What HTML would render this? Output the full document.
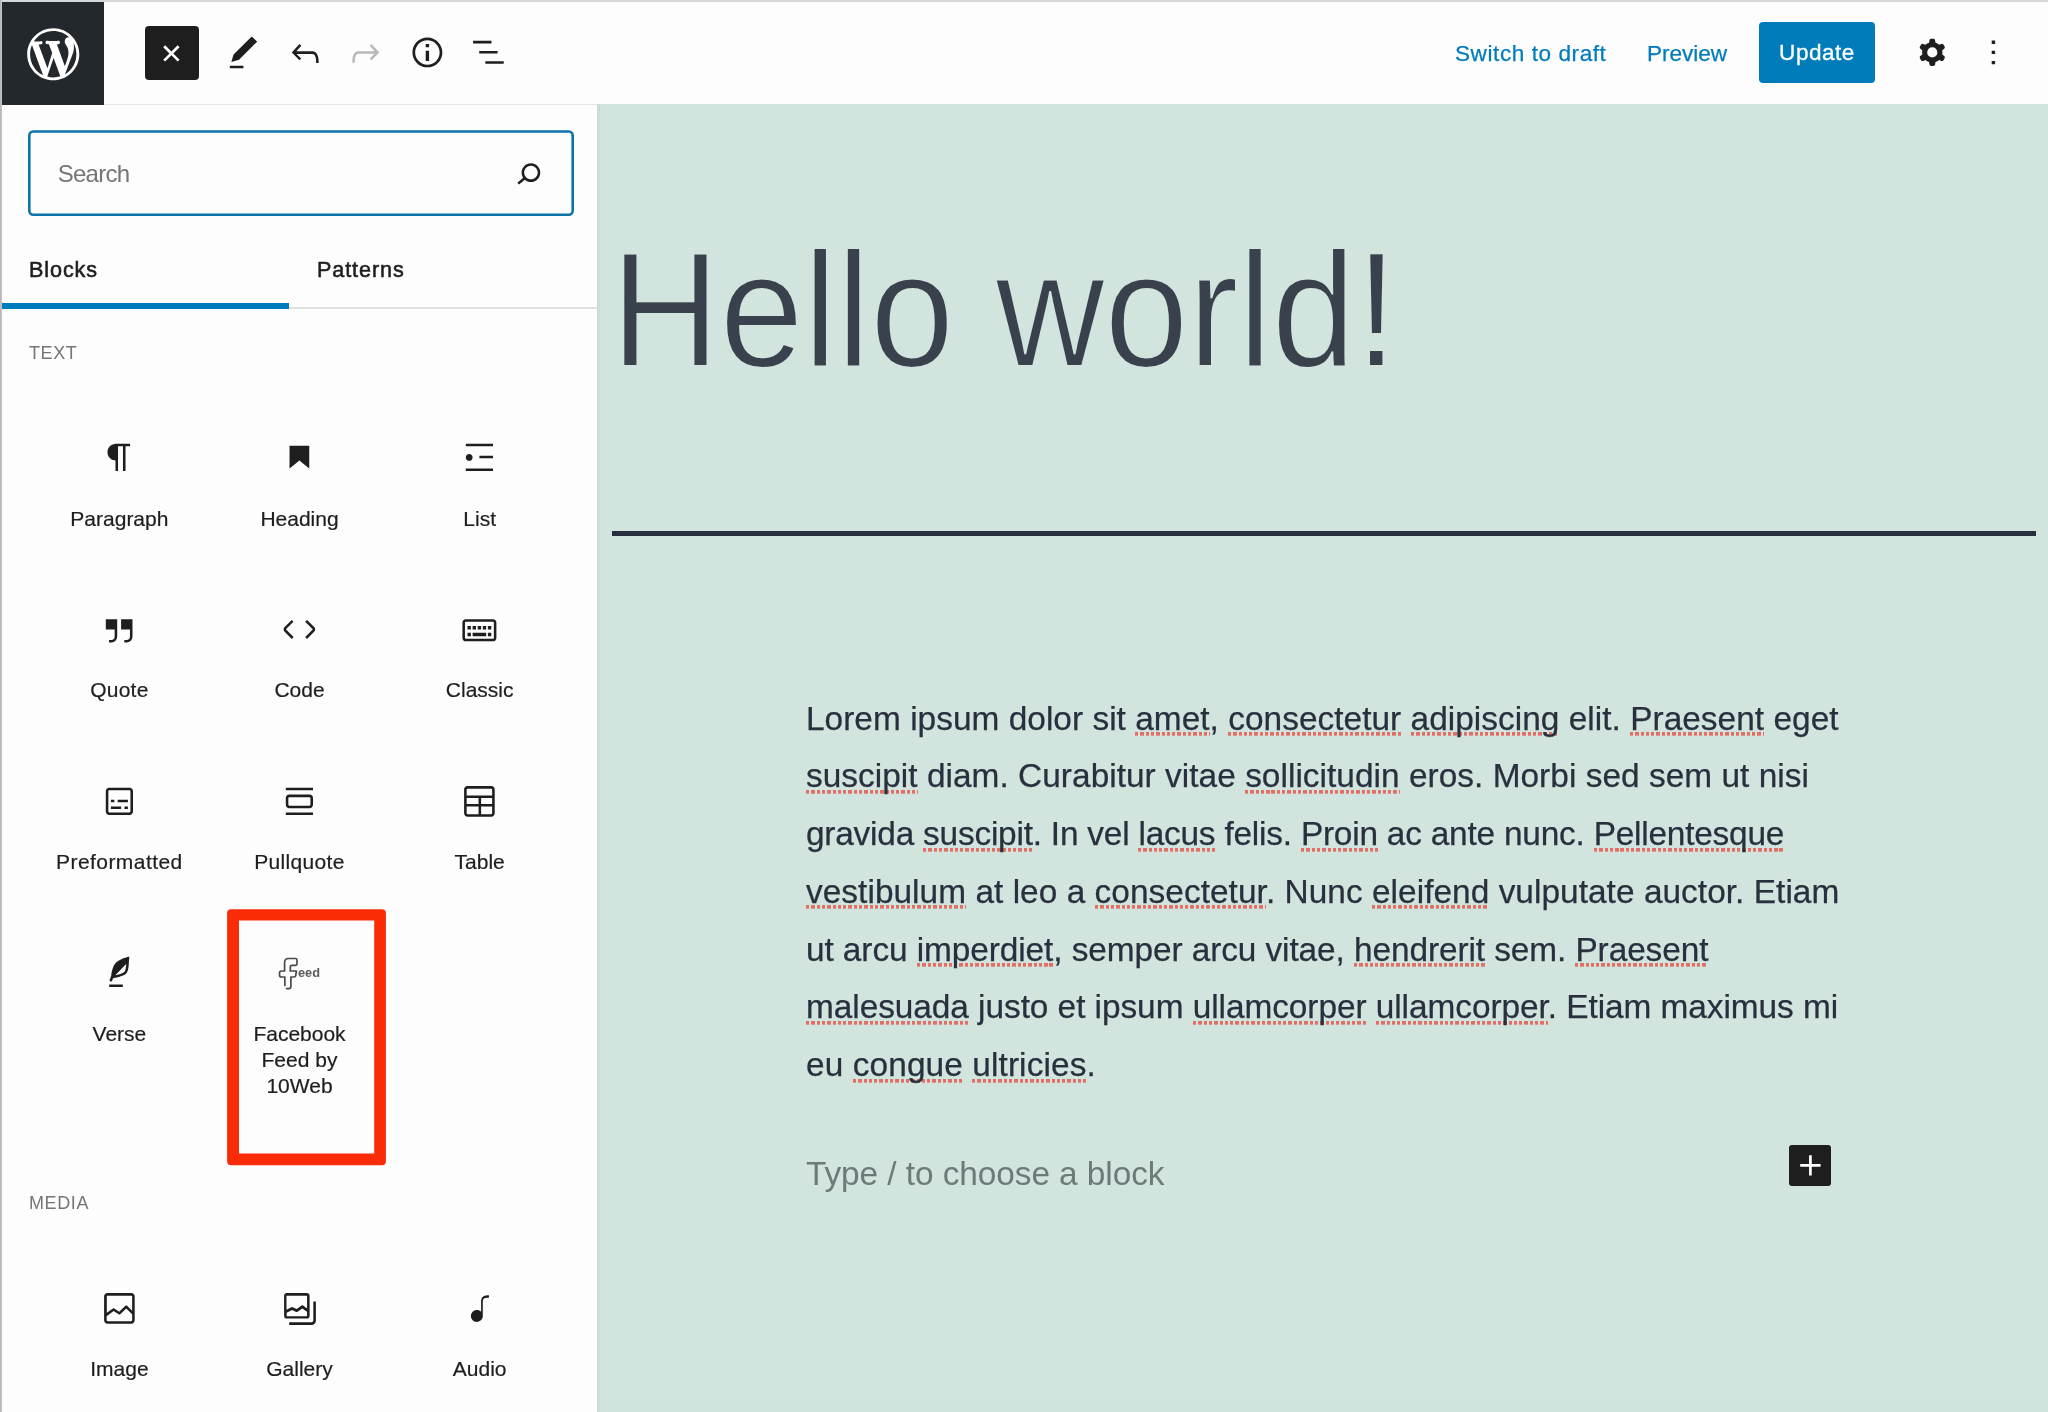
<!DOCTYPE html>
<html lang="en">
<head>
<meta charset="utf-8">
<title>Edit Post</title>
<style>
*{box-sizing:border-box;margin:0;padding:0}
html,body{width:2048px;height:1412px;overflow:hidden;background:#fff}
body{will-change:transform;font-family:"Liberation Sans",sans-serif;color:#1e1e1e;position:relative}
.abs{position:absolute}
#frame-top{left:0;top:0;width:2048px;height:2px;background:linear-gradient(#dadcde,#cfd1d3)}
#frame-left{left:0;top:0;width:2px;height:1412px;background:linear-gradient(90deg,#b4b6b8,#c4c6c8)}
#topbar{left:2px;top:2px;width:2046px;height:103px;background:#fdfdfd;border-bottom:1px solid #e6e6e6}
#wplogo{left:2px;top:2px;width:102px;height:103px;background:#23282d}
#closebtn{left:145px;top:26px;width:54px;height:54px;background:#1e1e1e;border-radius:4px}
#sidebar{left:2px;top:105px;width:595px;height:1307px;background:#fdfdfd}
#content{left:597px;top:104px;width:1451px;height:1308px;background:linear-gradient(#d2e4de 0 1296px,#cfe2db 1296px);border-left:3px solid #d0dbd6}
.ico{position:absolute}
.lnk{position:absolute;color:#007cba;font-size:22.6px;line-height:26px;white-space:nowrap;-webkit-text-stroke:.25px #007cba}
#update{left:1759px;top:22px;width:116px;height:61px;background:#007cba;border-radius:4px;color:#fff;font-size:22.6px;line-height:62px;text-align:center;letter-spacing:.5px;-webkit-text-stroke:.3px #fff}
#search{left:28px;top:130px;width:546px;height:86px}
#search span{position:absolute;left:29.7px;top:30px;font-size:24px;line-height:28px;color:#757575;letter-spacing:-.75px}
.tab{position:absolute;font-size:21.6px;line-height:26px;font-weight:normal;color:#1e1e1e;white-space:nowrap;-webkit-text-stroke:.55px #1e1e1e;letter-spacing:.9px}
#tabline{left:2px;top:307px;width:595px;height:2px;background:#e0e0e0}
#tabactive{left:2px;top:302.6px;width:287px;height:6.6px;background:#007cba}
.cat{position:absolute;font-size:18px;line-height:22px;color:#757575;letter-spacing:.6px;white-space:nowrap}
.lbl{position:absolute;width:180px;text-align:center;font-size:21px;line-height:26px;color:#1e1e1e;-webkit-text-stroke:.2px #1e1e1e}
#title{left:611px;top:218.2px;font-size:163px;line-height:184px;color:#39414d;white-space:nowrap;transform:scaleX(.9234);transform-origin:0 0;-webkit-text-stroke:2px #d2e4de}
#hr{left:612px;top:530.8px;width:1424px;height:4.9px;background:#28303d}
#para{left:806px;top:689.5px;width:1100px;font-size:33.4px;line-height:57.8px;color:#28303d;white-space:nowrap;-webkit-text-stroke:.25px #28303d}
#para .ln{display:block;height:57.8px}
#l1{letter-spacing:0.035px}#l2{letter-spacing:0.037px}#l3{letter-spacing:-0.213px}#l4{letter-spacing:0.045px}#l5{letter-spacing:-0.085px}#l6{letter-spacing:-0.052px}#l7{letter-spacing:0.105px}
#para u{text-decoration:none;padding-bottom:5px;background:repeating-linear-gradient(90deg,#e16f65 0 3.3px,transparent 3.3px 5.3px) 0 32.5px/100% 3.7px no-repeat}
#placeholder{left:806px;top:1144.8px;letter-spacing:-.07px;font-size:33.4px;line-height:57.8px;color:#6b7b79;white-space:nowrap}
#plus{left:1789px;top:1145px;width:42px;height:41px;background:#1e1e1e;border-radius:3px}

svg.i{position:absolute;width:40.8px;height:40.8px;fill:#1e1e1e;overflow:visible}
</style>
</head>
<body>
<div class="abs" id="topbar"></div>
<div class="abs" id="wplogo"></div>
<div class="abs" id="closebtn"></div>
<div class="lnk" style="left:1455px;top:40.5px;letter-spacing:.55px">Switch to draft</div>
<div class="lnk" style="left:1647px;top:40.5px;letter-spacing:-.05px">Preview</div>
<div class="abs" id="update">Update</div>

<div class="abs" id="sidebar"></div>
<div class="abs" id="search"><svg class="abs" style="left:0;top:0;width:546px;height:86px" viewBox="0 0 546 86"><rect x="1.3" y="1.5" width="543.4" height="83.2" rx="3.9" fill="#fdfdfd" stroke="#0c74a8" stroke-width="2.6"/></svg><span>Search</span></div>
<div class="tab" style="left:29px;top:257px">Blocks</div>
<div class="tab" style="left:317px;top:257px">Patterns</div>
<div class="abs" id="tabline"></div>
<div class="abs" id="tabactive"></div>
<div class="cat" style="left:29px;top:342px">TEXT</div>
<div class="cat" style="left:29px;top:1192px">MEDIA</div>

<div class="lbl" style="left:29.4px;top:505.5px">Paragraph</div>
<div class="lbl" style="left:209.5px;top:505.5px">Heading</div>
<div class="lbl" style="left:389.7px;top:505.5px">List</div>
<div class="lbl" style="left:29.4px;top:677px;letter-spacing:.24px">Quote</div>
<div class="lbl" style="left:209.5px;top:677px">Code</div>
<div class="lbl" style="left:389.7px;top:677px">Classic</div>
<div class="lbl" style="left:29.4px;top:849px;letter-spacing:.44px">Preformatted</div>
<div class="lbl" style="left:209.5px;top:849px;letter-spacing:.33px">Pullquote</div>
<div class="lbl" style="left:389.7px;top:849px">Table</div>
<div class="lbl" style="left:29.4px;top:1021px">Verse</div>
<div class="lbl" style="left:209.5px;top:1021px">Facebook<br>Feed by<br>10Web</div>
<div class="lbl" style="left:29.4px;top:1355.5px">Image</div>
<div class="lbl" style="left:209.5px;top:1355.5px">Gallery</div>
<div class="lbl" style="left:389.7px;top:1355.5px">Audio</div>
<!-- block icons -->
<svg class="i" style="left:99.0px;top:437.1px" viewBox="0 0 24 24"><path d="M18.3 4H9.9v-.1l-.9.2c-2.3.4-4 2.4-4 4.8s1.7 4.4 4 4.8l.7.1V20h1.5V5.500000000000001h2.9V20h1.5V5.500000000000001h2.7V4z"/></svg>
<svg class="i" style="left:279.1px;top:437.1px" viewBox="0 0 24 24"><path d="M6.2 5.2v13.4l5.8-4.8 5.8 4.8V5.2z"/></svg>
<svg class="i" style="left:459.3px;top:437.1px" viewBox="0 0 24 24"><path d="M4 4v1.5h16V4H4zm8 8.5h8V11h-8v1.5zM4 20h16v-1.5H4V20zm4-8c0-1.1-.9-2-2-2s-2 .9-2 2 .9 2 2 2 2-.9 2-2z"/></svg>
<svg class="i" style="left:99.0px;top:608.8px" viewBox="0 0 24 24"><path d="M13 6v6h5.2v4c0 .8-.2 1.4-.5 1.7-.6.6-1.6.6-2.5.5h-.3v1.5h.5c1 0 2.3-.1 3.3-1 .6-.6 1-1.6 1-2.8V6H13zm-9 6h5.2v4c0 .8-.2 1.4-.5 1.7-.6.6-1.6.6-2.5.5h-.3v1.5h.5c1 0 2.3-.1 3.3-1 .6-.6 1-1.6 1-2.8V6H4v6z"/></svg>
<svg class="i" style="left:279.1px;top:608.8px" viewBox="0 0 24 24"><path d="M20.8 10.7l-4.3-4.3-1.1 1.1 4.3 4.3c.1.1.1.3 0 .4l-4.3 4.3 1.1 1.1 4.3-4.3c.7-.8.7-1.9 0-2.6zM4.2 11.8l4.3-4.3-1-1-4.3 4.3c-.7.7-.7 1.8 0 2.500000000000001l4.3 4.3 1.1-1.1-4.3-4.3c-.2-.1-.2-.3-.1-.4z"/></svg>
<svg class="i" style="left:459.3px;top:608.8px" viewBox="0 0 24 24"><path d="M20 6H4c-1.1 0-2 .9-2 2v9c0 1.1.9 2 2 2h16c1.1 0 2-.9 2-2V8c0-1.1-.9-2-2-2zm.5 11c0 .3-.2.5-.5.5H4c-.3 0-.5-.2-.5-.5V8c0-.3.2-.5.5-.5h16c.3 0 .5.2.5.5v9zM10 10H8v2h2v-2zm-5 2h2v-2H5v2zm8-2h-2v2h2v-2zm-5 6h8v-2H8v2zm6-4h2v-2h-2v2zm3 0h2v-2h-2v2zm0 4h2v-2h-2v2zM5 16h2v-2H5v2z"/></svg>
<svg class="i" style="left:99.0px;top:780.9px" viewBox="0 0 24 24"><path d="M18 4H6c-1.1 0-2 .9-2 2v12c0 1.1.9 2 2 2h12c1.1 0 2-.9 2-2V6c0-1.1-.9-2-2-2zm.5 14c0 .3-.2.5-.5.5H6c-.3 0-.5-.2-.5-.5V6c0-.3.2-.5.5-.5h12c.3 0 .5.2.5.5v12zM7 16.5h6V15H7v1.5zm4-4h6V11h-6v1.5zM9 11H7v1.5h2V11zm6 5.5h2V15h-2v1.5z"/></svg>
<svg class="i" style="left:279.1px;top:780.9px" viewBox="0 0 24 24"><path d="M18 8H6c-1.1 0-2 .9-2 2v4c0 1.1.9 2 2 2h12c1.1 0 2-.9 2-2v-4c0-1.1-.9-2-2-2zm.5 6c0 .3-.2.5-.5.5H6c-.3 0-.5-.2-.5-.5v-4c0-.3.2-.5.5-.5h12c.3 0 .5.2.5.5v4zM4 4v1.5h16V4H4zm0 16h16v-1.5H4V20z"/></svg>
<svg class="i" style="left:459.3px;top:780.9px" viewBox="0 0 24 24"><path d="M19 3H5c-1.1 0-2 .9-2 2v14c0 1.1.9 2 2 2h14c1.1 0 2-.9 2-2V5c0-1.1-.9-2-2-2zM5 4.5h14c.3 0 .5.2.5.5v3.5h-15V5c0-.3.2-.5.5-.5zm8 5.5h6.5v3.5H13V10zm-1.5 3.5h-7V10h7v3.5zm-7 5.5v-4h7v4.5H5c-.3 0-.5-.2-.5-.5zm14.5.5h-6V15h6.5v4c0 .3-.2.5-.5.5z"/></svg>
<svg class="i" style="left:99.0px;top:952.9px" viewBox="0 0 24 24"><path d="M17.8 2l-.9.3c-.1 0-3.6 1-5.2 2.1C10 5.5 9.3 6.5 8.9 7.1c-.6.9-1.7 4.7-1.7 6.3l-.9 2.3c-.2.4 0 .8.4 1 .1 0 .2.1.3.1.3 0 .6-.2.7-.5l.6-1.5c.3 0 .7-.1 1.2-.2.7-.1 1.4-.3 2.2-.5.8-.2 1.600000000000001-.5 2.400000000000001-.8.7-.3 1.4-.7 1.9-1.2s.8-1.2 1-1.9c.2-.7.3-1.600000000000001.4-2.400000000000001.1-.8.1-1.7.2-2.500000000000001 0-.8.1-1.5.2-2.1V2zm-1.9 5.6c-.1.8-.2 1.5-.3 2.1-.2.6-.4 1-.6 1.3-.3.3-.8.6-1.4.9-.7.3-1.4.5-2.2.8-.6.2-1.3.3-1.8.4L15 7.500000000000001c.3-.3.6-.7 1-1.1 0 .4 0 .8-.1 1.2zM6 20h8v-1.5H6V20z"/></svg>
<svg class="i" style="left:99.0px;top:1287.7px" viewBox="0 0 24 24"><path d="M19 3H5c-1.1 0-2 .9-2 2v14c0 1.1.9 2 2 2h14c1.1 0 2-.9 2-2V5c0-1.1-.9-2-2-2zM5 4.5h14c.3 0 .5.2.5.5v8.4l-3-2.9c-.3-.3-.8-.3-1 0L11.9 14 9 12c-.3-.2-.6-.2-.8 0l-3.6 2.6V5c-.1-.3.1-.5.4-.5zm14 15H5c-.3 0-.5-.2-.5-.5v-2.4l4.1-3 3 1.9c.3.2.7.2.9-.1L16 12l3.5 3.4V19c0 .3-.2.5-.5.5z"/></svg>
<svg class="i" style="left:279.1px;top:1287.7px" viewBox="0 0 24 24"><path d="M20.2 8v11c0 .7-.6 1.2-1.2 1.2H6v1.5h13c1.5 0 2.7-1.2 2.7-2.8V8h-1.5zM18 16.4V4.6c0-.9-.7-1.6-1.6-1.6H4.6C3.7 3 3 3.7 3 4.6v11.8c0 .9.7 1.6 1.6 1.6h11.8c.9 0 1.6-.7 1.6-1.6zM4.5 4.6c0-.1.1-.1.1-.1h11.8c.1 0 .1.1.1.1V12l-2.3-1.7c-.3-.2-.6-.2-.9 0l-2.9 2.1L8 11.3c-.2-.1-.5-.1-.7 0l-2.9 1.5V4.6zm0 11.8v-1.8l3.2-1.7 2.4 1.2c.2.1.5.1.8-.1l2.8-2 2.8 2v2.5c0 .1-.1.1-.1.1H4.6c0-.1-.1-.2-.1-.2z"/></svg>
<svg class="i" style="left:459.3px;top:1287.7px" viewBox="0 0 24 24"><path d="M17.7 4.3c-1.2 0-2.8 0-3.8 1-.6.6-.9 1.5-.9 2.6V14c-.6-.6-1.5-1-2.5-1C8.6 13 7 14.6 7 16.5S8.6 20 10.5 20c1.5 0 2.8-1 3.3-2.3.1-.3.2-.7.2-1.2V7.9c0-.7.2-1.2.5-1.6.6-.6 1.8-.6 2.8-.6h.3V4.3h.1z"/></svg>
<svg class="abs" style="left:260px;top:940px;width:80px;height:60px" viewBox="0 0 80 60"><path d="M24.85 45.4V37H21.5Q19.5 37 19.5 35V33Q19.5 31 21.5 31H24.6V22.5Q24.6 18.5 28.6 18.5H35.5Q37 18.500000000000004 37 20V24Q37 25.3 35.5 25.3H32Q30.3 25.3 30.3 27V31H36.4L35.7 35.6Q35.5 37 34 37H30.9V46.500000000000004Q30.9 48.6 28.8 48.6H26.5" fill="none" stroke="#4a4a4a" stroke-width="1.7" stroke-linecap="round" stroke-linejoin="round"/><text x="38" y="37.3" font-family="Liberation Sans, sans-serif" font-weight="bold" font-size="12.8" fill="#5a5a5a">eed</text></svg>
<svg class="abs" id="redbox" style="left:220px;top:900px;width:180px;height:280px" viewBox="0 0 180 280"><path fill="#fa2b07" fill-rule="evenodd" d="M11.1 9.2H161.9A4 4 0 0 1 165.9 13.2V261.2A4 4 0 0 1 161.9 265.2H11.1A4 4 0 0 1 7.1 261.2V13.2A4 4 0 0 1 11.1 9.2ZM19.0 20.4H154.2V253.6H19.0Z"/></svg>

<div class="abs" id="content"></div>
<div class="abs" id="title">Hello world!</div>
<div class="abs" id="hr"></div>
<div class="abs" id="para">
<span class="ln" id="l1">Lorem ipsum dolor sit <u>amet</u>, <u>consectetur</u> <u>adipiscing</u> elit. <u>Praesent</u> eget</span>
<span class="ln" id="l2"><u>suscipit</u> diam. Curabitur vitae <u>sollicitudin</u> eros. Morbi sed sem ut nisi</span>
<span class="ln" id="l3">gravida <u>suscipit</u>. In vel <u>lacus</u> felis. <u>Proin</u> ac ante nunc. <u>Pellentesque</u></span>
<span class="ln" id="l4"><u>vestibulum</u> at leo a <u>consectetur</u>. Nunc <u>eleifend</u> vulputate auctor. Etiam</span>
<span class="ln" id="l5">ut arcu <u>imperdiet</u>, semper arcu vitae, <u>hendrerit</u> sem. <u>Praesent</u></span>
<span class="ln" id="l6"><u>malesuada</u> justo et ipsum <u>ullamcorper</u> <u>ullamcorper</u>. Etiam maximus mi</span>
<span class="ln" id="l7">eu <u>congue</u> <u>ultricies</u>.</span>
</div>
<div class="abs" id="placeholder">Type / to choose a block</div>
<div class="abs" id="plus"></div>

<!-- toolbar icons -->
<svg class="abs" style="left:21.65px;top:22.95px;width:62.5px;height:62.5px;fill:#fff" viewBox="-2 -2 24 24"><path d="M20 10c0-5.51-4.49-10-10-10C4.48 0 0 4.49 0 10c0 5.52 4.48 10 10 10 5.51 0 10-4.48 10-10zM7.78 15.37L4.37 6.22c.55-.02 1.17-.08 1.17-.08.5-.06.44-1.13-.06-1.11 0 0-1.45.11-2.37.11-.18 0-.37 0-.58-.01C4.12 2.69 6.87 1.11 10 1.11c2.33 0 4.45.87 6.05 2.34-.68-.11-1.65.39-1.65 1.58 0 .74.45 1.36.9 2.1.35.61.55 1.36.55 2.46 0 1.49-1.4 5-1.4 5l-3.03-8.37c.54-.02.82-.17.82-.17.5-.05.44-1.25-.06-1.22 0 0-1.44.12-2.38.12-.87 0-2.33-.12-2.33-.12-.5-.03-.56 1.2-.06 1.22l.92.08 1.26 3.41zM17.41 10c.24-.64.74-1.87.43-4.25.7 1.29 1.05 2.71 1.05 4.25 0 3.29-1.73 6.24-4.4 7.78.97-2.59 1.94-5.2 2.92-7.78zM6.1 18.09C3.12 16.65 1.11 13.53 1.11 10c0-1.3.23-2.48.72-3.59C3.25 10.3 4.67 14.2 6.1 18.09zm4.03-6.63l2.58 6.98c-.86.29-1.76.45-2.71.45-.79 0-1.57-.11-2.29-.33.81-2.38 1.62-4.74 2.42-7.1z"/></svg>
<svg class="i" style="left:151.2px;top:32.5px;fill:#fff" viewBox="0 0 24 24"><path transform="rotate(45 12 12)" d="M18 11.2h-5.2V6h-1.6v5.2H6v1.6h5.2V18h1.6v-5.2H18z"/></svg>
<svg class="i" style="left:222.9px;top:32.8px" viewBox="0 0 24 24"><path d="M20.1 5.1L16.9 2 6.2 12.7l-1.3 4.4 4.5-1.3L20.1 5.1zM4 20.8h8v-1.5H4v1.5z"/></svg>
<svg class="i" style="left:284.6px;top:32.5px" viewBox="0 0 24 24"><path d="M18.3 11.7c-.6-.6-1.4-.9-2.3-.9H6.7l2.9-3.3-1.1-1-4.5 5L8.5 16l1-1-2.7-2.7H16c.5 0 .9.2 1.3.5 1 1 1 3.4 1 4.5v.3h1.5v-.2c0-1.5 0-4.3-1.5-5.7z"/></svg>
<svg class="i" style="left:345.2px;top:32.5px;opacity:.3" viewBox="0 0 24 24"><path d="M15.6 6.5l-1.1 1 2.9 3.3H8c-.9 0-1.7.3-2.3.9-1.4 1.5-1.4 4.2-1.4 5.6v.2h1.5v-.3c0-1.1 0-3.5 1-4.5.3-.3.7-.5 1.3-.5h9.2L14.5 15l1.1 1.1 4.6-4.6-4.6-5z"/></svg>
<svg class="i" style="left:406.6px;top:32.2px" viewBox="0 0 24 24"><path d="M12 3.2c-4.8 0-8.8 3.9-8.8 8.8 0 4.8 3.9 8.8 8.8 8.8 4.8 0 8.8-3.9 8.8-8.8 0-4.8-4-8.8-8.8-8.8zm0 16c-4 0-7.2-3.3-7.2-7.2C4.8 8 8 4.8 12 4.8s7.2 3.3 7.2 7.2c0 4-3.2 7.2-7.2 7.2zM11 17h2v-6h-2v6zm0-8h2V7h-2v2z"/></svg>
<svg class="i" style="left:467.6px;top:32.1px" viewBox="0 0 24 24"><path d="M13.8 5.2H3v1.5h10.8V5.2zm-3.6 12v1.5H21v-1.5H10.2zm7.2-6H6.6v1.5h10.8v-1.5z"/></svg>
<svg class="i" style="left:1911.7px;top:32.2px" viewBox="0 0 24 24"><path fill-rule="evenodd" clip-rule="evenodd" d="M10.289 4.836A1 1 0 0111.275 4h1.306a1 1 0 01.987.836l.244 1.466c.787.26 1.503.679 2.108 1.218l1.393-.522a1 1 0 011.216.437l.653 1.13a1 1 0 01-.23 1.273l-1.148.944a6.025 6.025 0 010 2.435l1.149.946a1 1 0 01.23 1.272l-.653 1.13a1 1 0 01-1.216.437l-1.394-.522c-.605.54-1.32.958-2.108 1.218l-.244 1.466a1 1 0 01-.987.836h-1.306a1 1 0 01-.986-.836l-.244-1.466a5.995 5.995 0 01-2.108-1.218l-1.394.522a1 1 0 01-1.217-.436l-.653-1.131a1 1 0 01.23-1.272l1.149-.946a6.026 6.026 0 010-2.435l-1.148-.944a1 1 0 01-.23-1.272l.653-1.131a1 1 0 011.217-.437l1.393.522a5.994 5.994 0 012.108-1.218l.244-1.466zM14.929 12a3 3 0 11-6 0 3 3 0 016 0z"/></svg>
<svg class="i" style="left:1973.1px;top:32.3px" viewBox="0 0 24 24"><path d="M13 19h-2v-2h2v2zm0-6h-2v-2h2v2zm0-6h-2V5h2v2z"/></svg>
<svg class="i" style="left:508.2px;top:153px" viewBox="0 0 24 24"><path d="M13.5 6C10.5 6 8 8.5 8 11.5c0 1.1.3 2.1.9 3l-3.4 3 1 1.1 3.4-2.9c1 .9 2.2 1.4 3.6 1.4 3 0 5.500000000000001-2.500000000000001 5.500000000000001-5.500000000000001C19 8.5 16.5 6 13.5 6zm0 9.5c-2.2 0-4-1.8-4-4s1.8-4 4-4 4 1.8 4 4-1.8 4-4 4z"/></svg>
<svg class="i" style="left:1789.6px;top:1145.2px;fill:#fff" viewBox="0 0 24 24"><path d="M18 11.2h-5.2V6h-1.600000000000001v5.2H6v1.6h5.2V18h1.6v-5.2H18z"/></svg>
<div class="abs" id="frame-top"></div>
<div class="abs" id="frame-left"></div>
</body>
</html>
